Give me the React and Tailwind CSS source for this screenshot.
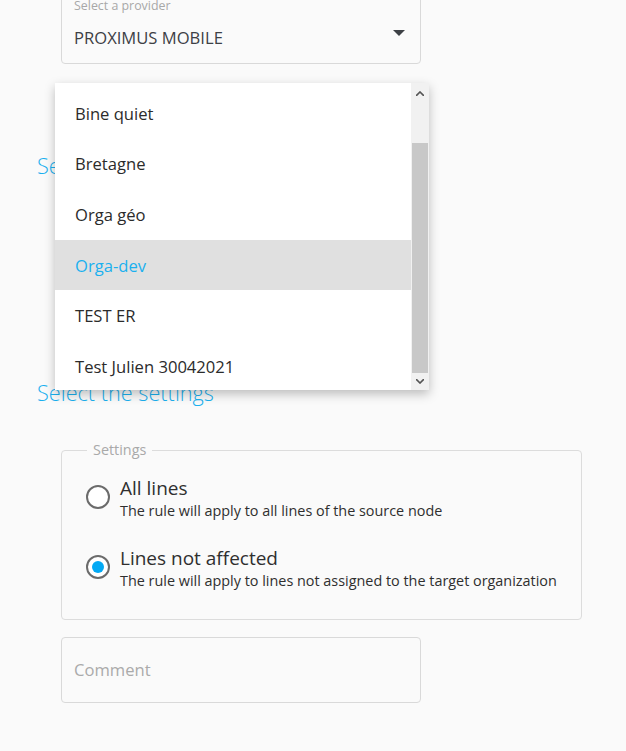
import React from "react";

const items = ["Bine quiet", "Bretagne", "Orga géo", "Orga-dev", "TEST ER", "Test Julien 30042021"];

function Radio({ checked }) {
  return (
    <div className="mt-[9px] w-[24px] h-[24px] rounded-full border-2 border-[#6b6b6b] flex items-center justify-center shrink-0 bg-white">
      {checked && <div className="w-[12px] h-[12px] rounded-full bg-[#03a9f4]" />}
    </div>
  );
}

export default function App() {
  return (
    <div className="relative h-[751px] w-[626px] overflow-hidden bg-[#fafafa] font-['Open_Sans',sans-serif] text-[#333]">
      <div className="relative ml-[61px] mt-[-10px] h-[74px] w-[360px] rounded-[4px] border border-[#d9d9d9]">
        <div className="absolute left-[12px] top-[8px] text-[12.4px] leading-[14px] text-[#a8a8a8]">Select a provider</div>
        <div className="absolute left-[12px] top-[35px] text-[16.6px] leading-[24px] text-[#3d4045]">PROXIMUS MOBILE</div>
        <svg className="absolute right-[15px] top-[39px]" width="12" height="7" viewBox="0 0 12 7">
          <path d="M0 0 L12 0 L6 6 Z" fill="#3d4045" />
        </svg>
      </div>

      <h2 className="ml-[37px] mt-[87px] text-[21.7px] leading-[30px] font-light text-[#1ab0ef]">Select the organization</h2>

      <div className="ml-[61px] mt-[40px] h-[65px] w-[360px] rounded-[4px] border border-[#d9d9d9]" />

      <h2 className="ml-[37px] mt-[92px] text-[21.7px] leading-[30px] font-light text-[#1ab0ef]">Select the settings</h2>

      <fieldset className="ml-[61px] mt-[32px] w-[521px] h-[180px] rounded-[4px] border border-[#dcdcdc] px-[24px]">
        <legend className="px-[6px] ml-[1px] text-[14.4px] leading-[20px] text-[#a9a9a9]">Settings</legend>
        <div className="mt-[16px] flex items-start gap-[10px]">
          <Radio />
          <div>
            <div className="text-[19px] leading-[24px] text-[#2f2f2f]">All lines</div>
            <div className="text-[14.4px] leading-[22px] text-[#2f2f2f]">The rule will apply to all lines of the source node</div>
          </div>
        </div>
        <div className="mt-[24px] flex items-start gap-[10px]">
          <Radio checked />
          <div>
            <div className="text-[19px] leading-[24px] text-[#2f2f2f]">Lines not affected</div>
            <div className="text-[14.4px] leading-[22px] text-[#2f2f2f]">The rule will apply to lines not assigned to the target organization</div>
          </div>
        </div>
      </fieldset>

      <div className="ml-[61px] mt-[17px] flex h-[66px] w-[360px] items-center rounded-[4px] border border-[#d9d9d9] px-[12px]">
        <span className="text-[16.6px] text-[#aaaaaa]">Comment</span>
      </div>

      <div className="absolute left-[55px] top-[83px] flex h-[307px] w-[374px] overflow-hidden bg-white shadow-[0_4px_10px_rgba(0,0,0,0.25)]">
        <div className="flex-1 pt-[5px]">
          {items.map((it) => (
            <div
              key={it}
              className={
                "flex h-[50.6px] items-center pl-[20px] pt-[2px] text-[16.6px] " +
                (it === "Orga-dev" ? "bg-[#e0e0e0] text-[#1ab0ef]" : "text-[#2b2b2b]")
              }
            >
              {it}
            </div>
          ))}
        </div>
        <div className="flex w-[18px] flex-col bg-[#f1f1f1]">
          <div className="flex h-[20px] items-center justify-center">
            <svg width="8" height="5" viewBox="0 0 8 5"><path d="M0 5 L4 1 L8 5" stroke="#555" strokeWidth="1.6" fill="none" /></svg>
          </div>
          <div className="mx-[1px] mt-[40px] h-[230px] bg-[#c8c8c8]" />
          <div className="flex flex-1 items-center justify-center">
            <svg width="8" height="5" viewBox="0 0 8 5"><path d="M0 0 L4 4 L8 0" stroke="#555" strokeWidth="1.6" fill="none" /></svg>
          </div>
        </div>
      </div>
    </div>
  );
}
